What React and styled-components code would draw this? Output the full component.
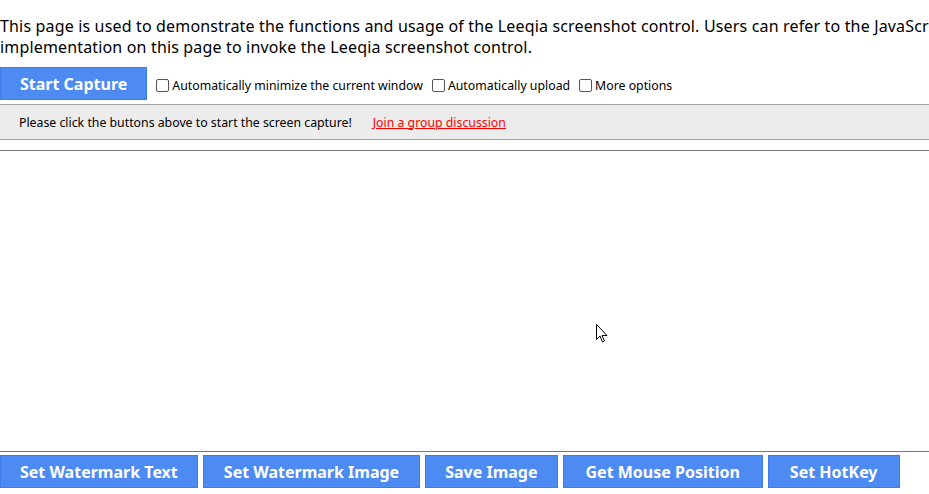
import React from 'react'
import styled, { createGlobalStyle } from 'styled-components'

const Global = createGlobalStyle`
  html, body { margin: 0; padding: 0; background: #fff; overflow: hidden; }
  body { font-family: "Noto Sans", "Open Sans", sans-serif; color: #000; }
`

const Page = styled.div`
  position: relative;
  width: 929px;
  height: 494px;
  overflow: hidden;
`

const Intro = styled.p`
  margin: 0;
  padding-top: 16px;
  font-size: 16px;
  line-height: 21px;
  letter-spacing: 0.16px;
  white-space: nowrap;
`

const Toolbar = styled.div`
  display: flex;
  align-items: center;
  margin-top: 9px;
  height: 33px;
`

const Button = styled.button`
  height: 33px;
  padding: 0 ${p => p.$pad || 19}px;
  border: 1px solid #3d7ce9;
  background: #4d8bf2;
  color: #fff;
  font-family: "Noto Sans", "Open Sans", sans-serif;
  font-weight: 700;
  font-size: 16px;
  cursor: pointer;
  flex-shrink: 0;
`

const Option = styled.label`
  display: flex;
  align-items: center;
  font-size: 12.3px;
  margin-left: 9px;
  white-space: nowrap;
  padding-top: 3px;
`

const Box = styled.span`
  width: 11px;
  height: 11px;
  border: 1px solid #555;
  border-radius: 2px;
  margin-right: 3px;
  background: #fff;
`

const Notice = styled.div`
  display: flex;
  align-items: center;
  margin-top: 4px;
  height: 34px;
  background: #ececec;
  border-top: 1px solid #a0a0a0;
  border-bottom: 1px solid #a0a0a0;
  padding-left: 19px;
  font-size: 12.3px;
`

const Link = styled.a`
  color: #ff0000;
  text-decoration: underline;
  margin-left: 21px;
`

const Rule = styled.hr`
  margin: 0;
  border: none;
  border-top: 1px solid #777;
  margin-top: ${p => p.$top}px;
`

const Canvas = styled.div`
  height: 300px;
`

const BottomBar = styled.div`
  display: flex;
  gap: 5px;
  margin-top: 3px;
`

const Cursor = styled.svg`
  position: absolute;
  left: 596px;
  top: 324px;
`

export default function App() {
  return (
    <Page>
      <Global />
      <Intro>
        This page is used to demonstrate the functions and usage of the Leeqia screenshot control. Users can refer to the JavaScript
        <br />
        implementation on this page to invoke the Leeqia screenshot control.
      </Intro>
      <Toolbar>
        <Button>Start Capture</Button>
        <Option><Box />Automatically minimize the current window</Option>
        <Option><Box />Automatically upload</Option>
        <Option><Box />More options</Option>
      </Toolbar>
      <Notice>
        Please click the buttons above to start the screen capture!
        <Link href="#">Join a group discussion</Link>
      </Notice>
      <Rule $top={10} />
      <Canvas />
      <Rule $top={0} />
      <BottomBar>
        <Button>Set Watermark Text</Button>
        <Button $pad={20}>Set Watermark Image</Button>
        <Button>Save Image</Button>
        <Button $pad={22}>Get Mouse Position</Button>
        <Button $pad={21}>Set HotKey</Button>
      </BottomBar>
      <Cursor width="13" height="20" viewBox="0 0 13 20">
        <path d="M0.5 0.5 L0.5 15.5 L4 12 L6.5 18 L8.5 17 L6 11.5 L11 11.5 Z" fill="#fff" stroke="#000" strokeWidth="1" />
      </Cursor>
    </Page>
  )
}
